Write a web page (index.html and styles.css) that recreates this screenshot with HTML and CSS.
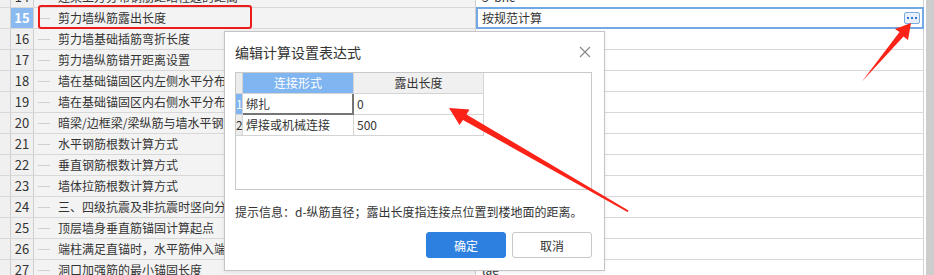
FILE: index.html
```html
<html>

<head>
  <meta charset="UTF-8">
  <title>计算设置</title>
  <link rel="stylesheet" href="styles.css">
</head>

<body>
  <div class="page">
    <div class="sheet">
      <div class="row"><div class="gutter"></div><div class="num">14</div><div class="name"><span class="tree"></span>连梁上方分布钢筋距暗柱边的距离</div><div class="val">3*bhc</div></div>
      <div class="row"><div class="gutter"></div><div class="num sel">15</div><div class="name"><span class="tree"></span>剪力墙纵筋露出长度</div><div class="val active">按规范计算<span class="more"><i></i><i></i><i></i></span></div></div>
      <div class="row"><div class="gutter"></div><div class="num">16</div><div class="name"><span class="tree"></span>剪力墙基础插筋弯折长度</div><div class="val"></div></div>
      <div class="row"><div class="gutter"></div><div class="num">17</div><div class="name"><span class="tree"></span>剪力墙纵筋错开距离设置</div><div class="val"></div></div>
      <div class="row"><div class="gutter"></div><div class="num">18</div><div class="name"><span class="tree"></span>墙在基础锚固区内左侧水平分布筋数量</div><div class="val"></div></div>
      <div class="row"><div class="gutter"></div><div class="num">19</div><div class="name"><span class="tree"></span>墙在基础锚固区内右侧水平分布筋数量</div><div class="val"></div></div>
      <div class="row"><div class="gutter"></div><div class="num">20</div><div class="name"><span class="tree"></span>暗梁/边框梁/梁纵筋与墙水平钢筋的关系</div><div class="val"></div></div>
      <div class="row"><div class="gutter"></div><div class="num">21</div><div class="name"><span class="tree"></span>水平钢筋根数计算方式</div><div class="val"></div></div>
      <div class="row"><div class="gutter"></div><div class="num">22</div><div class="name"><span class="tree"></span>垂直钢筋根数计算方式</div><div class="val"></div></div>
      <div class="row"><div class="gutter"></div><div class="num">23</div><div class="name"><span class="tree"></span>墙体拉筋根数计算方式</div><div class="val"></div></div>
      <div class="row"><div class="gutter"></div><div class="num">24</div><div class="name"><span class="tree"></span>三、四级抗震及非抗震时竖向分布筋搭接</div><div class="val"></div></div>
      <div class="row"><div class="gutter"></div><div class="num">25</div><div class="name"><span class="tree"></span>顶层墙身垂直筋锚固计算起点</div><div class="val"></div></div>
      <div class="row"><div class="gutter"></div><div class="num">26</div><div class="name"><span class="tree"></span>端柱满足直锚时，水平筋伸入端柱长度</div><div class="val"></div></div>
      <div class="row"><div class="gutter"></div><div class="num">27</div><div class="name"><span class="tree"></span>洞口加强筋的最小锚固长度</div><div class="val">lae</div></div>
    </div>
    <div class="scrollbar"></div>
  </div>

  <!-- 标注：红框 -->
  <div class="mark"></div>

  <!-- 编辑对话框 -->
  <div class="dialog">
    <div class="dlg-head">
      <span class="dlg-title">编辑计算设置表达式</span>
      <svg class="close" width="12" height="12" viewBox="0 0 12 12"><path d="M1 1L11 11M11 1L1 11" stroke="#8a8a8a" stroke-width="1.2" fill="none"/></svg>
    </div>
    <div class="box">
      <div class="etable">
        <div class="c corner"></div>
        <div class="c th blue">连接形式</div>
        <div class="c th">露出长度</div>
        <div class="c rh blue">1</div>
        <div class="c cur">绑扎</div>
        <div class="c">0</div>
        <div class="c rh">2</div>
        <div class="c">焊接或机械连接</div>
        <div class="c">500</div>
      </div>
    </div>
    <div class="hint">提示信息：d-纵筋直径；露出长度指连接点位置到楼地面的距离。</div>
    <div class="btns">
      <button class="btn ok">确定</button>
      <button class="btn">取消</button>
    </div>
  </div>

  <!-- 标注：箭头 -->
  <svg class="arrows" width="934" height="275" viewBox="0 0 934 275">
    <polygon fill="#fb2317" points="911,23 908,40 903.5,36.5 862,81.5 899.5,32 895,29"/>
    <polygon fill="#fb2317" points="449,108 469.5,109.5 466.5,114.5 628.5,210.5 627.5,212 463,120 459.5,125"/>
  </svg>
</body>

</html>
```
FILE: styles.css
```css
* {
  margin: 0;
  padding: 0;
  box-sizing: border-box;
}

body {
  width: 934px;
  height: 275px;
  overflow: hidden;
  background-color: #fff;
  color: #333;
  font-family: "Noto Sans CJK SC", "Noto Sans", sans-serif;
  font-size: 12px;
  position: relative;
}

.page {
  display: flex;
  height: 275px;
}

.sheet {
  width: 924px;
  margin-top: -13px;
}

.scrollbar {
  width: 8px;
  margin-left: 2px;
  background-color: #cdcdcd;
}

.row {
  display: flex;
  height: 21px;
  border-bottom: 1px solid #d8d8d8;
}

.gutter {
  width: 11px;
  background-color: #f0f0f0;
  border-right: 1px solid #cfcfcf;
}

.num {
  width: 23px;
  background-color: #f0f0f0;
  border-right: 1px solid #cfcfcf;
  font-size: 13px;
  line-height: 20px;
  text-align: center;
  color: #333;
}

.num.sel {
  background-color: #8bbaf1;
  color: #fff;
  font-weight: bold;
}

.name {
  width: 442px;
  background-color: #f3f3f3;
  border-right: 1px solid #d0d0d0;
  line-height: 20px;
  white-space: nowrap;
  overflow: hidden;
  display: flex;
  align-items: center;
}

.tree {
  width: 12px;
  height: 1px;
  background-color: #cfcfcf;
  margin: 0 8px 0 4px;
  flex: none;
}

.val {
  width: 448px;
  border-right: 1px solid #d0d0d0;
  line-height: 20px;
  padding-left: 6px;
  white-space: nowrap;
  display: flex;
  align-items: center;
}

.val.active {
  border: 2px solid #72a8e3;
  margin-top: -1px;
  height: 22px;
  padding-left: 4px;
  position: relative;
}

.more {
  margin-left: auto;
  margin-right: 2px;
  width: 16px;
  height: 12px;
  border: 1px solid #7aaae2;
  border-radius: 2px;
  background-color: #e9eff8;
  display: flex;
  justify-content: center;
  align-items: center;
  gap: 2px;
}

.more i {
  width: 2px;
  height: 2px;
  background-color: #2f78d4;
}

/* 红框标注 */
.mark {
  position: absolute;
  left: 38px;
  top: 5px;
  width: 214px;
  height: 24px;
  border: 2px solid #ee1b1b;
  border-radius: 3px;
}

/* 对话框 */
.dialog {
  position: absolute;
  left: 224px;
  top: 31px;
  width: 381px;
  height: 240px;
  background-color: #fff;
  border: 1px solid #c4c4c4;
  box-shadow: 0 1px 4px rgba(0, 0, 0, 0.08);
  padding: 0 12px 0 10px;
  display: flex;
  flex-direction: column;
}

.dlg-head {
  height: 40px;
  display: flex;
  align-items: center;
  justify-content: space-between;
}

.dlg-title {
  font-size: 14px;
  color: #333;
}

.close {
  margin-right: 1px;
}

.box {
  height: 118px;
  border: 1px solid #c9c9c9;
}

.etable {
  display: grid;
  grid-template-columns: 7px 111px 130px;
  grid-auto-rows: 21px;
  width: 248px;
}

.c {
  border-right: 1px solid #d4d4d4;
  border-bottom: 1px solid #d4d4d4;
  line-height: 20px;
  padding-left: 3px;
  white-space: nowrap;
  overflow: hidden;
}

.corner,
.rh {
  background-color: #ececec;
  padding-left: 0;
  text-align: center;
}

.th {
  background-color: #f0f0f0;
  text-align: center;
  padding-left: 0;
}

.blue {
  background-color: #7fb5f0;
  color: #fff;
}

.cur {
  border-right: 2px solid #757575;
  border-bottom: 2px solid #757575;
}

.hint {
  margin-top: 12px;
  line-height: 20px;
  color: #333;
}

.btns {
  margin-top: 10px;
  display: flex;
  justify-content: flex-end;
  gap: 6px;
}

.btn {
  width: 80px;
  height: 26px;
  border: 1px solid #c8c8c8;
  border-radius: 3px;
  background-color: #fff;
  color: #333;
  font-family: "Noto Sans CJK SC", sans-serif;
  font-size: 12px;
}

.btn.ok {
  background-color: #2e80e0;
  border-color: #2e80e0;
  color: #fff;
}

.arrows {
  position: absolute;
  left: 0;
  top: 0;
  pointer-events: none;
}
```
